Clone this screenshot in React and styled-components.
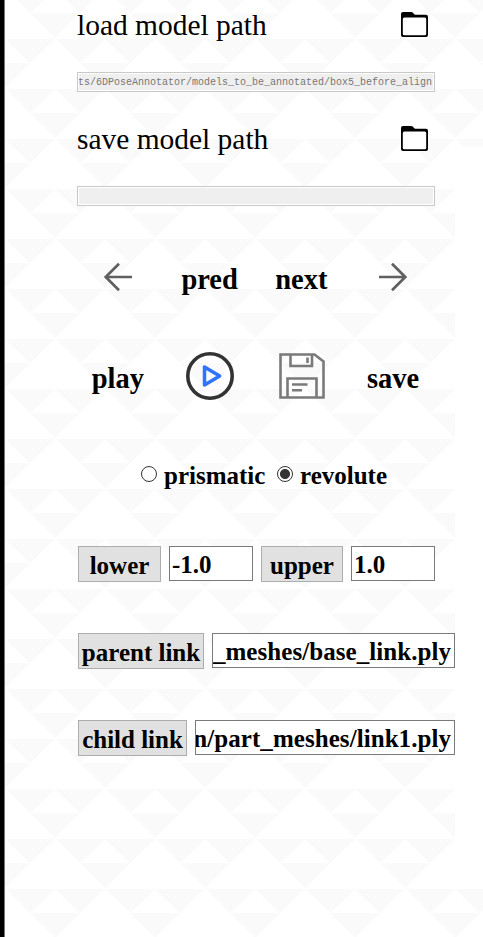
import React from "react";
import styled, { createGlobalStyle } from "styled-components";

const tile = encodeURIComponent(
  `<svg xmlns="http://www.w3.org/2000/svg" width="100" height="100"><path fill="#fafafa" d="M-49 0H50L0 49ZM51 0H150L100 49ZM1 50H99L50 99Z"/><path fill="#fff" d="M0 0L25 24H-25ZM100 0L125 24H75ZM50 50L75 74H25Z"/></svg>`
);

const GlobalStyle = createGlobalStyle`
  * { box-sizing: border-box; }
  body { margin: 0; background: #fff; }
`;

const Panel = styled.main`
  width: 483px;
  height: 937px;
  overflow: hidden;
  border-left: 4px solid #000;
  padding-left: 74px;
  color: #000;
  font-family: "Liberation Serif", "Times New Roman", serif;
  box-shadow: inset 1px 0 #777;
  background:
    linear-gradient(#fff, #fff) 451px 147px / 28px 742px no-repeat,
    url("data:image/svg+xml,${tile}") 1px 39px / 100px 100px,
    #fff;
`;

const PathHeader = styled.header`
  display: flex;
  justify-content: space-between;
  width: 351px;
  height: 50px;
  margin: ${({ $top }) => $top}px 0 22px -1px;
`;

const PathTitle = styled.h2`
  margin: 0;
  font-size: 29.45px;
  line-height: 50px;
  font-weight: 400;
  white-space: nowrap;
`;

const PathField = styled.div`
  width: 358px;
  height: 20px;
  margin-left: -1px;
  border: 1px solid #c9c9c9;
  box-shadow: inset 0 0 0 1px #fff;
  background: #efefef;
  color: #777;
  font: 10px/20px "Liberation Mono", monospace;
  white-space: nowrap;
  overflow: hidden;
`;

const ActionGrid = styled.div`
  display: grid;
  grid-template-columns: repeat(4, 1fr);
  align-items: center;
  justify-items: center;
  width: 367px;
  height: 60px;
  margin: ${({ $top }) => $top}px 0 0 -6px;
`;

const ActionLabel = styled.span`
  padding-top: 5px;
  font-size: 28.5px;
  line-height: 32px;
  font-weight: 700;
`;

const JointTypes = styled.div`
  display: flex;
  align-items: center;
  height: 36px;
  margin: 52px 0 0 63px;
`;

const JointOption = styled.label`
  display: flex;
  align-items: center;
  gap: 7px;
  width: ${({ $width }) => $width}px;
  font-size: 25px;
  line-height: 32px;
  font-weight: 700;
`;

const Radio = styled.span`
  flex: none;
  width: 16px;
  height: 16px;
  margin-bottom: 5px;
  border: 1px solid #333;
  border-radius: 50%;
  background: ${({ $on }) => ($on ? "radial-gradient(circle, #333 4.6px, #fff 5.4px)" : "#fff")};
`;

const FieldRow = styled.div`
  display: flex;
  gap: 8px;
  height: 36px;
  margin-top: ${({ $top }) => $top}px;
`;

const FieldButton = styled.button`
  flex: none;
  width: ${({ $width }) => $width}px;
  height: 36px;
  padding: 4px 0 0;
  border: 1px solid #adadad;
  background: #e1e1e1;
  color: #000;
  font: 700 25px/30px "Liberation Serif", "Times New Roman", serif;
  white-space: nowrap;
`;

const FieldValue = styled.div`
  display: flex;
  flex: none;
  justify-content: ${({ $end }) => ($end ? "flex-end" : "flex-start")};
  width: ${({ $width }) => $width}px;
  height: 35px;
  padding: 1px 0 0;
  border: 1px solid #7a7a7a;
  background: #fff;
  font-size: 25px;
  line-height: 34px;
  font-weight: 700;
  letter-spacing: ${({ $end }) => ($end ? "0.06px" : "normal")};
  white-space: nowrap;
  overflow: hidden;
`;

const ValueText = styled.span`
  padding: 0 3px 0 2px;
`;

const FolderSvg = styled.svg`
  margin-top: 12px;
`;

const Folder = () => (
  <FolderSvg width="27" height="25" viewBox="0 0 27 25">
    <path d="M0 2Q0 0 2 0H10Q12 0 13 2L14 2.7H25Q27 2.7 27 4.7V23Q27 25 25 25H2Q0 25 0 23Z" />
    <rect x="1.8" y="5.6" width="23.4" height="17.6" rx="1.5" fill="#fff" />
  </FolderSvg>
);

const ArrowLeft = () => (
  <svg width="30" height="30" viewBox="0 0 30 30" fill="none" stroke="#606060" strokeWidth="2.7">
    <path d="M29 15H3M16 1.7L2.7 15L16 28.3" />
  </svg>
);

const ArrowRight = () => (
  <svg width="30" height="30" viewBox="0 0 30 30" fill="none" stroke="#606060" strokeWidth="2.7">
    <path d="M1 15H27M14 1.7L27.3 15L14 28.3" />
  </svg>
);

const Play = () => (
  <svg width="48" height="48" viewBox="0 0 48 48" fill="none">
    <circle cx="24" cy="24" r="22.2" stroke="#333" strokeWidth="3.6" />
    <path d="M18.5 15V33L33.7 24Z" stroke="#2f74ff" strokeWidth="3.5" strokeLinejoin="round" />
  </svg>
);

const Floppy = () => (
  <svg width="48" height="46" viewBox="-2 0 48 46" fill="none" stroke="#7a7a7a">
    <path strokeWidth="2.6" d="M1.5 1.5H35.5L44.5 8.5V44.5H1.5Z" />
    <path strokeWidth="2.6" d="M11.5 1.5V13H33V1.5M8.5 44.5V25.5H37.5V44.5" />
    <path strokeWidth="2.6" d="M28.5 4.5V10M13 31.5H28.5M13 37.2H23" />
  </svg>
);

export default function App() {
  return (
    <>
      <GlobalStyle />
      <Panel>
        <PathHeader $top={0}>
          <PathTitle>load model path</PathTitle>
          <Folder />
        </PathHeader>
        <PathField>ts/6DPoseAnnotator/models_to_be_annotated/box5_before_align</PathField>
        <PathHeader $top={22}>
          <PathTitle>save model path</PathTitle>
          <Folder />
        </PathHeader>
        <PathField />
        <ActionGrid $top={41}>
          <ArrowLeft />
          <ActionLabel>pred</ActionLabel>
          <ActionLabel>next</ActionLabel>
          <ArrowRight />
        </ActionGrid>
        <ActionGrid $top={39}>
          <ActionLabel>play</ActionLabel>
          <Play />
          <Floppy />
          <ActionLabel>save</ActionLabel>
        </ActionGrid>
        <JointTypes>
          <JointOption $width={136}>
            <Radio />
            prismatic
          </JointOption>
          <JointOption $width={120}>
            <Radio $on />
            revolute
          </JointOption>
        </JointTypes>
        <FieldRow $top={52}>
          <FieldButton $width={83}>lower</FieldButton>
          <FieldValue $width={84}><ValueText>-1.0</ValueText></FieldValue>
          <FieldButton $width={82}>upper</FieldButton>
          <FieldValue $width={84}><ValueText>1.0</ValueText></FieldValue>
        </FieldRow>
        <FieldRow $top={51}>
          <FieldButton $width={126}>parent link</FieldButton>
          <FieldValue $width={243} $end><ValueText>_meshes/base_link.ply</ValueText></FieldValue>
        </FieldRow>
        <FieldRow $top={51}>
          <FieldButton $width={109}>child link</FieldButton>
          <FieldValue $width={260} $end><ValueText>n/part_meshes/link1.ply</ValueText></FieldValue>
        </FieldRow>
      </Panel>
    </>
  );
}
